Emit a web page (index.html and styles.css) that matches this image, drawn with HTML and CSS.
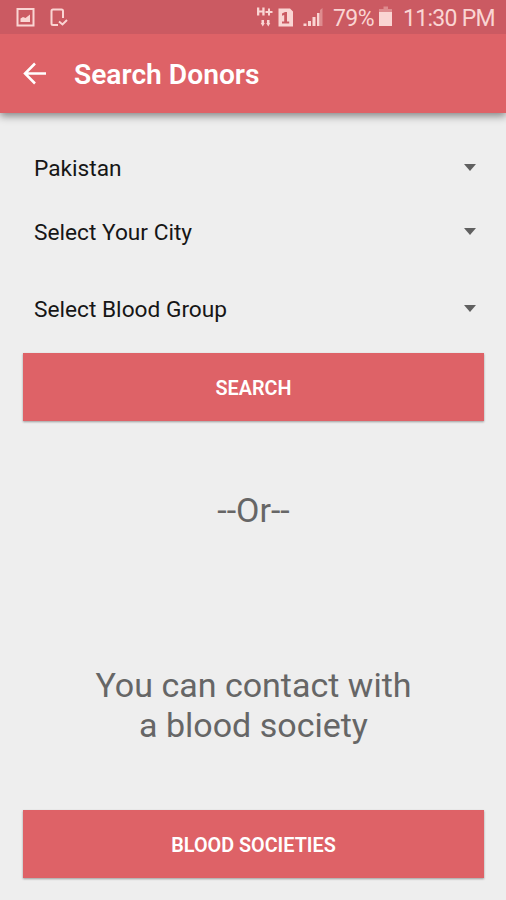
FILE: index.html
```html
<!DOCTYPE html>
<html lang="en">
<head>
<meta charset="utf-8">
<title>Search Donors</title>
<link rel="stylesheet" href="styles.css">
</head>
<body>
<div class="status">
  <svg class="notifications" width="60" height="34" viewBox="0 0 60 34" fill="none" stroke="currentColor" stroke-width="2">
    <path d="M5.500 9h16v16.500h-16z"/>
    <path d="M8.500 22v-3.500l2.500-1.500 2.500 1 4.500-3.500v7.500z" fill="currentColor" stroke="none"/>
    <path d="M51 18V11q0-1.500-1.500-1.500h-8.500q-1.500 0-1.500 1.500v12.500q0 1.500 1.500 1.500h5M47 21.500l3.500 3 4.500-4.500"/>
  </svg>
  <svg class="signals" width="70" height="34" viewBox="0 0 70 34" fill="currentColor">
    <path d="M0 7.500h2.300v3h3V7.500h2.300v8H5.300v-3h-3v3H0zM11 8.500h2v2.500h2.500v2H13v2.500h-2V13H8.500v-2H11zM4.500 20h2.500v3h.8L5.800 26.500L3.700 23h.8zM10 20h2.500v3h.8L11.300 26.500L9.200 23h.8z"/>
    <path fill-rule="evenodd" d="M21.500 8.500h11.500l3 3v15H21.500zM28 12l-3 1.500v2.300l2.200-.8V21.500H25V23.500h7.200V21.500H30V12z"/>
    <path d="M46.500 26v-2.500h3V26zM51 26v-5h3v5zM55.500 26v-9h3v9zM60 26v-13h2.500v13z"/>
    <path class="faint" d="M63 26V10l2.500-2v18z"/>
  </svg>
  <span class="percent">79%</span>
  <svg class="battery" width="13" height="34" viewBox="0 0 13 34" fill="currentColor">
    <path class="faint" d="M4.500 6.500h4.500v2.500H13V12H0V9h4.500z"/>
    <path d="M0 12h13v14H0z"/>
  </svg>
  <span class="time">11:30 PM</span>
</div>
<header class="toolbar">
  <svg class="back" width="24" height="24" viewBox="0 0 24 24" fill="none" stroke="currentColor" stroke-width="2.500">
    <path d="M24 11.500H2.500M13 1.500L3 11.500l10 10"/>
  </svg>
  <h1 class="title">Search Donors</h1>
</header>
<main class="content">
  <div class="spinner"><span>Pakistan</span><i class="caret"></i></div>
  <div class="spinner"><span>Select Your City</span><i class="caret"></i></div>
  <div class="spinner blood-group"><span>Select Blood Group</span><i class="caret"></i></div>
  <button class="button">SEARCH</button>
  <p class="or">--Or--</p>
  <p class="hint">You can contact with<br>a blood society</p>
  <button class="button">BLOOD SOCIETIES</button>
</main>
</body>
</html>
```
FILE: styles.css
```css
* { box-sizing: border-box; }

body {
  margin: 0;
  height: 900px;
  overflow: hidden;
  background: #eee;
  font-family: Roboto, "Liberation Sans", sans-serif;
}

.status {
  position: relative;
  z-index: 1;
  display: flex;
  align-items: center;
  height: 34px;
  padding: 0 11px 0 12px;
  background: #cb5a62;
  color: #fad5d3;
  font-size: 23px;
  line-height: 34px;
}

.status svg { flex: none; }
.signals { margin-left: auto; margin-right: 6px; }
.percent { width: 41px; padding-top: 3px; letter-spacing: -0.6px; white-space: nowrap; }
.battery { margin: 0 11px 0 5px; }
.time { width: 92px; padding-top: 3px; letter-spacing: -0.700px; white-space: nowrap; }
.faint { opacity: 0.4; }

.toolbar {
  display: flex;
  align-items: center;
  height: 79px;
  padding: 0 22px;
  background: #de6267;
  color: #fff;
  box-shadow: 0 3px 8px rgba(0, 0, 0, 0.45);
}

.title {
  margin: 2px 0 0 28px;
  font-size: 28.200px;
  font-weight: 600;
  line-height: 34px;
}

.content {
  display: flex;
  flex-direction: column;
  padding: 22px 22px 0 23px;
}

.spinner {
  display: flex;
  align-items: center;
  justify-content: space-between;
  height: 64px;
  padding: 0 8px 0 11px;
  color: #161616;
  font-size: 22.700px;
}

.spinner span { padding-top: 2px; }

.blood-group { margin-top: 13px; }

.caret {
  border: 6px solid transparent;
  border-top: 7px solid #606060;
  border-bottom: 0;
}

.button {
  height: 68px;
  margin: 13px 0 0;
  padding: 2px 0 0;
  border: 0;
  background: #de6267;
  box-shadow: 0 1px 2px rgba(0, 0, 0, 0.35);
  color: #fff;
  font: 600 19.800px Roboto, "Liberation Sans", sans-serif;
}

.or, .hint {
  margin: 69px 0 0;
  color: #666;
  font-size: 34px;
  line-height: 40px;
  text-align: center;
}

.hint { margin: 135px 0 52px; }
```
